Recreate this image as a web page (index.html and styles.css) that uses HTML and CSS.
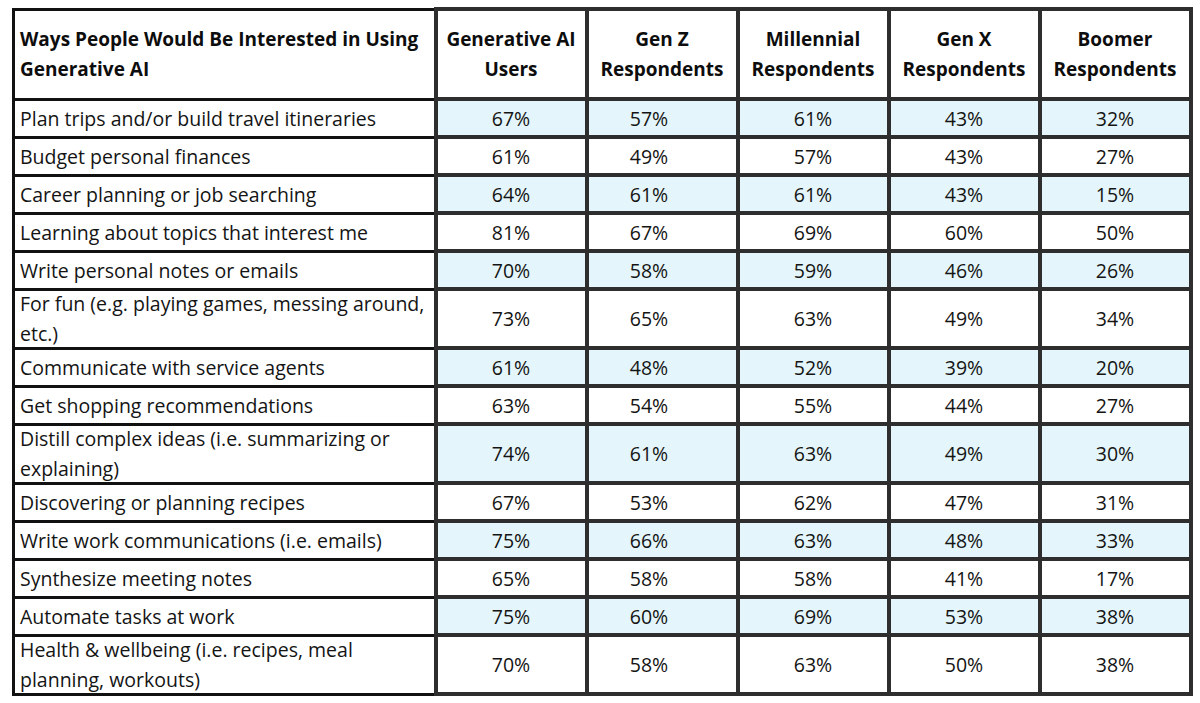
FILE: index.html
```html
<!DOCTYPE html>
<html lang="en">
<head>
<meta charset="utf-8">
<title>Ways People Would Be Interested in Using Generative AI</title>
<link rel="stylesheet" href="styles.css">
</head>
<body>
<main class="page">
<table class="survey">
  <colgroup>
    <col class="c-label">
    <col class="c-data"><col class="c-data"><col class="c-data"><col class="c-data"><col class="c-data">
  </colgroup>
  <thead>
    <tr class="head">
      <th class="label">Ways People Would Be Interested in Using<br>Generative AI</th>
      <th class="val">Generative AI<br>Users</th>
      <th class="val">Gen Z<br>Respondents</th>
      <th class="val">Millennial<br>Respondents</th>
      <th class="val">Gen X<br>Respondents</th>
      <th class="val">Boomer<br>Respondents</th>
    </tr>
  </thead>
  <tbody>
    <tr class="tint"><td class="label">Plan trips and/or build travel itineraries</td><td>67%</td><td class="genz">57%</td><td>61%</td><td>43%</td><td>32%</td></tr>
    <tr><td class="label">Budget personal finances</td><td>61%</td><td class="genz">49%</td><td>57%</td><td>43%</td><td>27%</td></tr>
    <tr class="tint"><td class="label">Career planning or job searching</td><td>64%</td><td class="genz">61%</td><td>61%</td><td>43%</td><td>15%</td></tr>
    <tr><td class="label">Learning about topics that interest me</td><td>81%</td><td class="genz">67%</td><td>69%</td><td>60%</td><td>50%</td></tr>
    <tr class="tint"><td class="label">Write personal notes or emails</td><td>70%</td><td class="genz">58%</td><td>59%</td><td>46%</td><td>26%</td></tr>
    <tr class="tall"><td class="label"><span class="two">For fun (e.g. playing games, messing around,<br>etc.)</span></td><td>73%</td><td class="genz">65%</td><td>63%</td><td>49%</td><td>34%</td></tr>
    <tr class="tint"><td class="label">Communicate with service agents</td><td>61%</td><td class="genz">48%</td><td>52%</td><td>39%</td><td>20%</td></tr>
    <tr><td class="label">Get shopping recommendations</td><td>63%</td><td class="genz">54%</td><td>55%</td><td>44%</td><td>27%</td></tr>
    <tr class="tint tall"><td class="label"><span class="two">Distill complex ideas (i.e. summarizing or<br>explaining)</span></td><td>74%</td><td class="genz">61%</td><td>63%</td><td>49%</td><td>30%</td></tr>
    <tr><td class="label">Discovering or planning recipes</td><td>67%</td><td class="genz">53%</td><td>62%</td><td>47%</td><td>31%</td></tr>
    <tr class="tint"><td class="label">Write work communications (i.e. emails)</td><td>75%</td><td class="genz">66%</td><td>63%</td><td>48%</td><td>33%</td></tr>
    <tr><td class="label">Synthesize meeting notes</td><td>65%</td><td class="genz">58%</td><td>58%</td><td>41%</td><td>17%</td></tr>
    <tr class="tint"><td class="label">Automate tasks at work</td><td>75%</td><td class="genz">60%</td><td>69%</td><td>53%</td><td>38%</td></tr>
    <tr class="tall"><td class="label"><span class="two">Health &amp; wellbeing (i.e. recipes, meal<br>planning, workouts)</span></td><td>70%</td><td class="genz">58%</td><td>63%</td><td>50%</td><td>38%</td></tr>
  </tbody>
</table>
</main>
</body>
</html>
```

FILE: styles.css
```css
html, body {
  margin: 0;
  padding: 0;
  background: #ffffff;
}

.page {
  padding: 7px 0 0 12px;
}

.survey {
  width: 1178px;
  table-layout: fixed;
  border-collapse: collapse;
  font-family: "Open Sans", Lato, "Liberation Sans", sans-serif;
  font-size: 19.5px;
  color: #141414;
}

.c-label { width: 422px; }
.c-data { width: 151px; }

.survey th,
.survey td {
  border: 4px solid #2e2e2e;
  padding: 0;
  text-align: center;
  vertical-align: middle;
  line-height: 29px;
}

.survey .label {
  border: 3px solid #111111;
  text-align: left;
  padding-left: 5px;
  white-space: nowrap;
}

.survey th {
  font-size: 19px;
  font-weight: 700;
  line-height: 30px;
  color: #0d0d0d;
}

.survey .genz {
  padding-right: 26px;
}

.two {
  display: block;
  line-height: 30px;
  margin: -3px 0;
}

.head { height: 90px; }
tbody tr { height: 38px; }
tbody tr.tall { height: 59px; }

.tint td:not(.label) {
  background: #e4f6fb;
}
```
